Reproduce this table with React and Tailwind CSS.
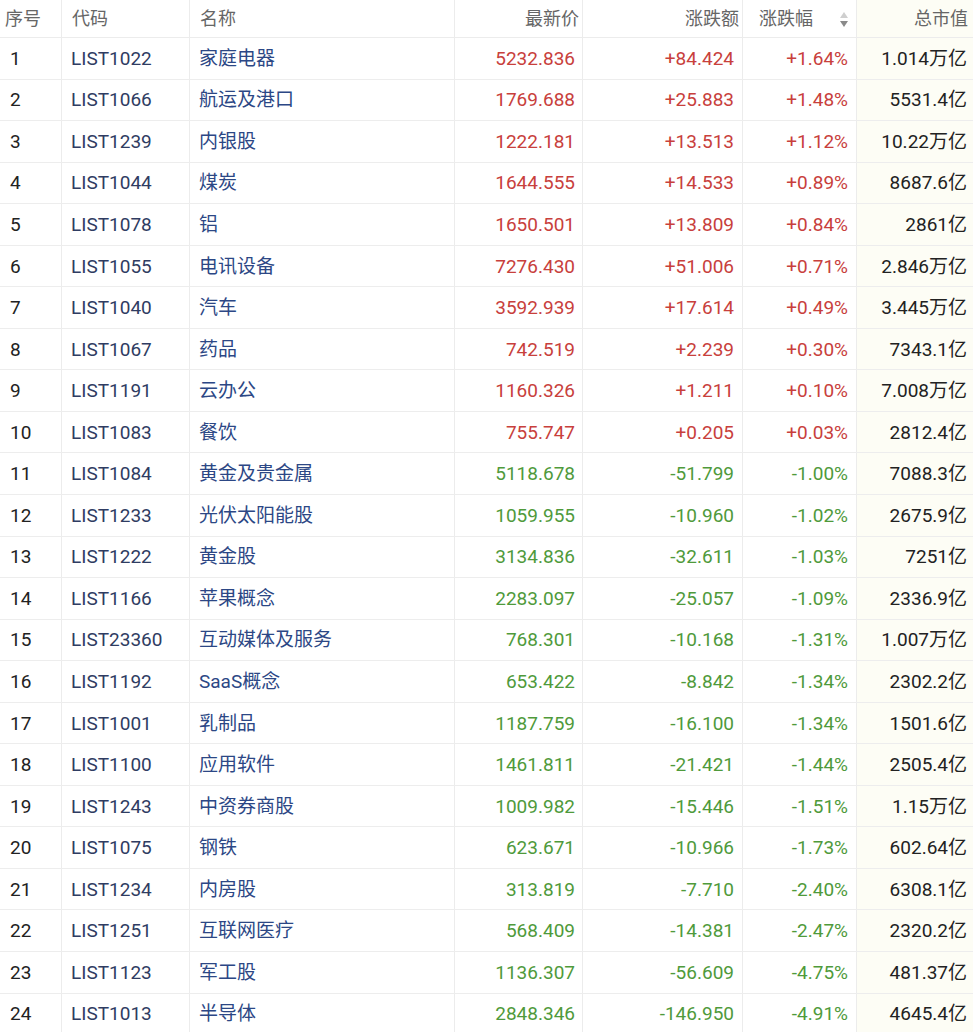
import React from "react";

const rows = [
  ["1", "LIST1022", "家庭电器", "5232.836", "+84.424", "+1.64%", "1.014万亿"],
  ["2", "LIST1066", "航运及港口", "1769.688", "+25.883", "+1.48%", "5531.4亿"],
  ["3", "LIST1239", "内银股", "1222.181", "+13.513", "+1.12%", "10.22万亿"],
  ["4", "LIST1044", "煤炭", "1644.555", "+14.533", "+0.89%", "8687.6亿"],
  ["5", "LIST1078", "铝", "1650.501", "+13.809", "+0.84%", "2861亿"],
  ["6", "LIST1055", "电讯设备", "7276.430", "+51.006", "+0.71%", "2.846万亿"],
  ["7", "LIST1040", "汽车", "3592.939", "+17.614", "+0.49%", "3.445万亿"],
  ["8", "LIST1067", "药品", "742.519", "+2.239", "+0.30%", "7343.1亿"],
  ["9", "LIST1191", "云办公", "1160.326", "+1.211", "+0.10%", "7.008万亿"],
  ["10", "LIST1083", "餐饮", "755.747", "+0.205", "+0.03%", "2812.4亿"],
  ["11", "LIST1084", "黄金及贵金属", "5118.678", "-51.799", "-1.00%", "7088.3亿"],
  ["12", "LIST1233", "光伏太阳能股", "1059.955", "-10.960", "-1.02%", "2675.9亿"],
  ["13", "LIST1222", "黄金股", "3134.836", "-32.611", "-1.03%", "7251亿"],
  ["14", "LIST1166", "苹果概念", "2283.097", "-25.057", "-1.09%", "2336.9亿"],
  ["15", "LIST23360", "互动媒体及服务", "768.301", "-10.168", "-1.31%", "1.007万亿"],
  ["16", "LIST1192", "SaaS概念", "653.422", "-8.842", "-1.34%", "2302.2亿"],
  ["17", "LIST1001", "乳制品", "1187.759", "-16.100", "-1.34%", "1501.6亿"],
  ["18", "LIST1100", "应用软件", "1461.811", "-21.421", "-1.44%", "2505.4亿"],
  ["19", "LIST1243", "中资券商股", "1009.982", "-15.446", "-1.51%", "1.15万亿"],
  ["20", "LIST1075", "钢铁", "623.671", "-10.966", "-1.73%", "602.64亿"],
  ["21", "LIST1234", "内房股", "313.819", "-7.710", "-2.40%", "6308.1亿"],
  ["22", "LIST1251", "互联网医疗", "568.409", "-14.381", "-2.47%", "2320.2亿"],
  ["23", "LIST1123", "军工股", "1136.307", "-56.609", "-4.75%", "481.37亿"],
  ["24", "LIST1013", "半导体", "2848.346", "-146.950", "-4.91%", "4645.4亿"],
];

const font = {
  fontFamily: '"Roboto", "Noto Sans CJK SC", sans-serif',
};

function SortIcon() {
  return (
    <svg width="10" height="20" viewBox="0 0 10 20" className="ml-auto">
      <path d="M5 3 L9 9 L1 9 Z" fill="#cfcfcf" />
      <path d="M1 12 L9 12 L5 18 Z" fill="#8a8a8a" />
    </svg>
  );
}

export default function App() {
  return (
    <div
      className="w-[973px] h-[1032px] overflow-hidden bg-white"
      style={font}
    >
      <div className="grid grid-cols-[62px_128px_265px_128px_160px_114px_116px] h-[38px] border-b border-[#ececec] text-[18px] text-[#666666] leading-none">
        <div className="flex items-center pl-[5px] border-r border-[#ececec]">序号</div>
        <div className="flex items-center pl-[10px] border-r border-[#ececec]">代码</div>
        <div className="flex items-center pl-[10px] border-r border-[#ececec]">名称</div>
        <div className="flex items-center justify-end pr-[3px] border-r border-[#ececec]">最新价</div>
        <div className="flex items-center justify-end pr-[3px] border-r border-[#ececec]">涨跌额</div>
        <div className="flex items-center pl-[16px] pr-[7px] border-r border-[#ececec]">
          <span>涨跌幅</span>
          <SortIcon />
        </div>
        <div className="flex items-center justify-end pr-[5px] bg-[#fdfdf5]">总市值</div>
      </div>
      {rows.map((r) => {
        const up = r[4].startsWith("+");
        const c = up ? "text-[#c8403c]" : "text-[#4f9a3b]";
        return (
          <div
            key={r[0]}
            className="grid grid-cols-[62px_128px_265px_128px_160px_114px_116px] h-[41.55px] border-b border-[#ededed] text-[19px] leading-none"
          >
            <div className="flex items-center pl-[10px] text-[#222222] border-r border-[#ececec]">{r[0]}</div>
            <div className="flex items-center pl-[9px] text-[#2f3c62] border-r border-[#ececec]">{r[1]}</div>
            <div className="flex items-center pl-[9px] text-[#2c4785] border-r border-[#ececec]">{r[2]}</div>
            <div className={`flex items-center justify-end pr-[7px] border-r border-[#ececec] ${c}`}>{r[3]}</div>
            <div className={`flex items-center justify-end pr-[8px] border-r border-[#ececec] ${c}`}>{r[4]}</div>
            <div className={`flex items-center justify-end pr-[8px] border-r border-[#ececec] ${c}`}>{r[5]}</div>
            <div className="flex items-center justify-end pr-[6px] text-[#222222] bg-[#fdfdf5]">{r[6]}</div>
          </div>
        );
      })}
    </div>
  );
}
